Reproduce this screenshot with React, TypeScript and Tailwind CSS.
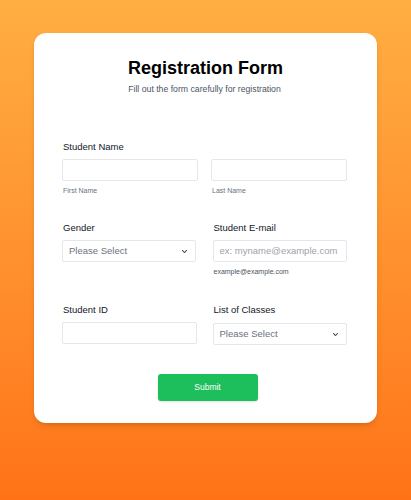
import React from "react";

const font = { fontFamily: '"Liberation Sans", Arial, sans-serif' };

function Chevron() {
  return (
    <svg width="7" height="7" viewBox="0 0 10 10" className="shrink-0">
      <path d="M2 3.5 L5 6.5 L8 3.5" fill="none" stroke="#4b5563" strokeWidth="1.5" strokeLinecap="round" strokeLinejoin="round" />
    </svg>
  );
}

function Label({ children }: { children: React.ReactNode }) {
  return <div className="text-[9.5px] leading-[12px] font-medium text-[#111827] pl-[1px]">{children}</div>;
}

function Input({ placeholder, className = "" }: { placeholder?: string; className?: string }) {
  return (
    <div className={"h-[22px] border border-[#e5e7eb] rounded-[2px] bg-white flex items-center px-[6px] text-[9.5px] text-[#9ca3af] " + className}>
      {placeholder}
    </div>
  );
}

function Select({ className = "" }: { className?: string }) {
  return (
    <div className={"h-[22px] border border-[#e5e7eb] rounded-[2px] bg-white flex items-center justify-between pl-[6px] pr-[7px] text-[9.5px] text-[#6b7280] " + className}>
      <span>Please Select</span>
      <Chevron />
    </div>
  );
}

export default function App() {
  return (
    <div style={font} className="w-[411px] h-[500px] bg-gradient-to-b from-[#ffae42] to-[#ff7316] pt-[33px] px-[34px]">
      <div className="w-[343px] h-[390px] bg-white rounded-[12px] shadow-md pt-[24px] pl-[28px] pr-[30px]">
        <div className="text-center text-[18px] leading-[22px] font-bold text-black pl-[2px]">Registration Form</div>
        <div className="text-center text-[8.7px] leading-[12px] text-[#4b5563] mt-[4px]">Fill out the form carefully for registration</div>

        <div className="mt-[46px]">
          <Label>Student Name</Label>
          <div className="grid grid-cols-2 gap-[13px] mt-[6px]">
            <div>
              <Input />
              <div className="text-[7px] leading-[10px] text-[#6b7280] mt-[5px] pl-[1px]">First Name</div>
            </div>
            <div>
              <Input />
              <div className="text-[7px] leading-[10px] text-[#6b7280] mt-[5px] pl-[1px]">Last Name</div>
            </div>
          </div>
        </div>

        <div className="grid grid-cols-2 gap-x-[16px] mt-[26px]">
          <div>
            <Label>Gender</Label>
            <Select className="mt-[6px] w-[134px]" />
          </div>
          <div>
            <Label>Student E-mail</Label>
            <Input className="mt-[6px] text-[#a1a1aa]" placeholder="ex: myname@example.com" />
            <div className="text-[7px] leading-[10px] text-[#4b5563] mt-[5px] pl-[1px]">example@example.com</div>
          </div>
        </div>

        <div className="grid grid-cols-2 gap-x-[16px] mt-[27px]">
          <div>
            <Label>Student ID</Label>
            <Input className="mt-[6px] w-[135px]" />
          </div>
          <div>
            <Label>List of Classes</Label>
            <Select className="mt-[7px]" />
          </div>
        </div>

        <div className="flex justify-center mt-[29px] pl-[6px]">
          <div className="w-[100px] h-[27px] bg-[#1dbe5c] rounded-[3px] flex items-center justify-center text-white text-[8.5px] shadow-sm">Submit</div>
        </div>
      </div>
    </div>
  );
}
